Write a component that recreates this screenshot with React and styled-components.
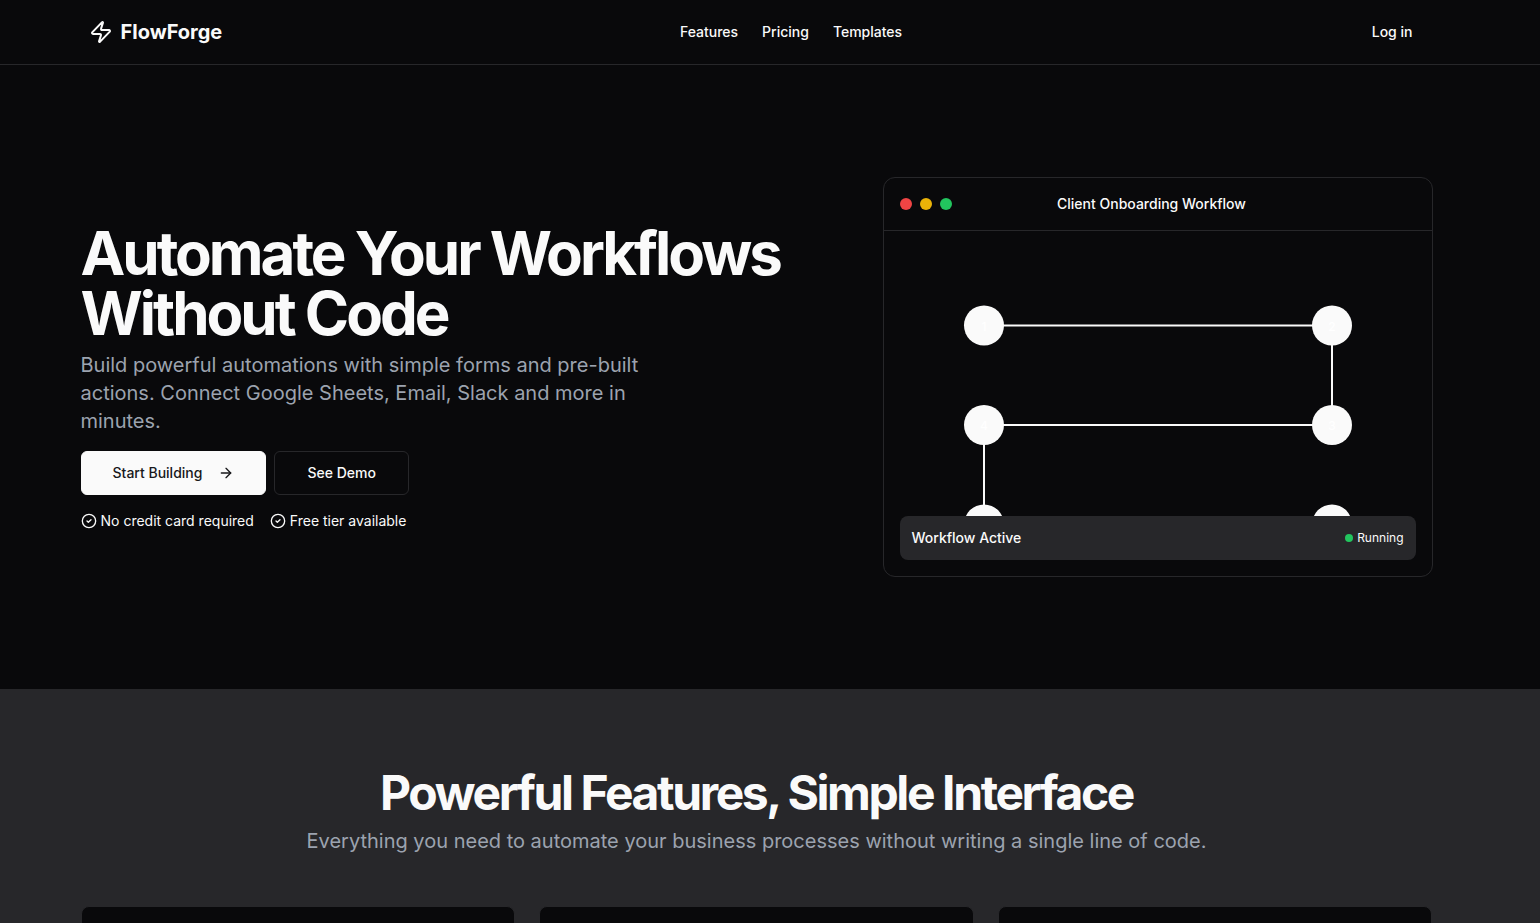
import React from "react";
import styled, { createGlobalStyle } from "styled-components";
import { ArrowRight, CircleCheck, Zap } from "lucide-react";

const GlobalStyle = createGlobalStyle`
  *, *::before, *::after { box-sizing: border-box; }
  body {
    margin: 0;
    background: #09090b;
    color: #fafafa;
    font-family: Inter, "Liberation Sans", sans-serif;
    font-size: 14px;
    line-height: 20px;
  }
  h1, h2, p { margin: 0; }
  a { color: inherit; text-decoration: none; }
`;

const Page = styled.div`
  display: flex;
  flex-direction: column;
  height: 100vh;
  overflow: hidden;
`;

const Container = styled.div`
  width: 100%;
  max-width: 1400px;
  margin: 0 auto;
  padding: 0 24px;
`;

const Header = styled.header`
  flex: none;
  padding-right: 27px;
  border-bottom: 1px solid #27272a;
`;

const HeaderRow = styled.div`
  display: flex;
  align-items: center;
  justify-content: space-between;
  height: 64px;
  padding: 0 8px;
`;

const Brand = styled.a`
  display: flex;
  align-items: center;
  gap: 8px;
  font-size: 20px;
  line-height: 28px;
  font-weight: 700;
`;

const Nav = styled.nav`
  display: flex;
  gap: 24px;
`;

const NavLink = styled.a`
  font-weight: 500;
`;

const LoginLink = styled(NavLink)`
  padding: 8px 12px;
`;

const Hero = styled.section`
  flex: none;
  padding: 112px 27px 112px 0;
`;

const HeroGrid = styled.div`
  display: grid;
  grid-template-columns: minmax(0, 1fr) 550px;
  gap: 48px;
  align-items: center;
`;

const HeroCopy = styled.div`
  display: flex;
  flex-direction: column;
  gap: 16px;
`;

const Intro = styled.div`
  display: flex;
  flex-direction: column;
  gap: 8px;
`;

const HeroTitle = styled.h1`
  font-size: 60px;
  line-height: 60px;
  font-weight: 700;
  letter-spacing: -0.05em;
`;

const HeroText = styled.p`
  max-width: 600px;
  color: #9ca3af;
  font-size: 20px;
  line-height: 28px;
`;

const Row = styled.div`
  display: flex;
  align-items: center;
  gap: ${(p) => p.$gap}px;
`;

const Button = styled.button`
  display: inline-flex;
  align-items: center;
  justify-content: center;
  gap: 16px;
  height: 44px;
  padding: 0 ${(p) => (p.$primary ? 31 : 32)}px;
  border: 1px solid ${(p) => (p.$primary ? "#fafafa" : "#27272a")};
  border-radius: 6px;
  background: ${(p) => (p.$primary ? "#fafafa" : "#09090b")};
  color: ${(p) => (p.$primary ? "#18181b" : "#fafafa")};
  font: 500 14px/20px Inter, "Liberation Sans", sans-serif;
`;

const Perk = styled.span`
  display: flex;
  align-items: center;
  gap: 4px;
`;

const Window = styled.div`
  border: 1px solid #27272a;
  border-radius: 12px;
  height: 400px;
  display: flex;
  flex-direction: column;
  overflow: hidden;
`;

const WindowBar = styled.div`
  display: flex;
  align-items: center;
  justify-content: space-between;
  padding: 16px;
  border-bottom: 1px solid #27272a;
  font-weight: 500;
`;

const Dot = styled.span`
  width: ${(p) => p.$size}px;
  height: ${(p) => p.$size}px;
  border-radius: 50%;
  background: ${(p) => p.$color};
`;

const BarSpacer = styled.span`
  width: 64px;
`;

const Canvas = styled.div`
  position: relative;
  flex: 1;
`;

const Diagram = styled.svg`
  display: block;
  width: 100%;
  height: 100%;
`;

const Status = styled.div`
  position: absolute;
  left: 16px;
  right: 16px;
  bottom: 16px;
  display: flex;
  align-items: center;
  justify-content: space-between;
  padding: 12px;
  border-radius: 8px;
  background: #27272a;
  font-weight: 500;
`;

const Running = styled(Row)`
  font-size: 12px;
  font-weight: 400;
`;

const Features = styled.section`
  flex: 1 0 auto;
  padding: 80px 27px 80px 0;
  background: #27272a;
`;

const FeaturesIntro = styled(Intro)`
  text-align: center;
  margin-bottom: 48px;
`;

const SectionTitle = styled.h2`
  font-size: 48px;
  line-height: 48px;
  font-weight: 700;
  letter-spacing: -0.05em;
`;

const SectionText = styled.p`
  color: #9ca3af;
  font-size: 20px;
  line-height: 33px;
`;

const Cards = styled.div`
  display: grid;
  grid-template-columns: repeat(3, 1fr);
  gap: 24px;
`;

const Card = styled.div`
  min-height: 200px;
  border: 1px solid #27272a;
  border-radius: 8px;
  background: #09090b;
`;

const nodes = [
  { x: 100, y: 94.5, label: "1" },
  { x: 448, y: 94.5, label: "2" },
  { x: 448, y: 194, label: "3" },
  { x: 100, y: 194, label: "4" },
  { x: 100, y: 293.5 },
  { x: 448, y: 293.5 },
];

function WorkflowWindow() {
  return (
    <Window>
      <WindowBar>
        <Row $gap={8}>
          <Dot $size={12} $color="#ef4444" />
          <Dot $size={12} $color="#eab308" />
          <Dot $size={12} $color="#22c55e" />
        </Row>
        <span>Client Onboarding Workflow</span>
        <BarSpacer />
      </WindowBar>
      <Canvas>
        <Diagram viewBox="0 0 548 345">
          <path d="M100 94.5H448V194H100V294" fill="none" stroke="#fafafa" strokeWidth="2" />
          {nodes.map((n, i) => (
            <g key={i}>
              <circle cx={n.x} cy={n.y} r="20" fill="#fafafa" />
              {n.label && (
                <text x={n.x} y={n.y + 5} textAnchor="middle" fill="#ffffff" fontSize="12" fontWeight="500">
                  {n.label}
                </text>
              )}
            </g>
          ))}
        </Diagram>
        <Status>
          <span>Workflow Active</span>
          <Running $gap={4}>
            <Dot $size={8} $color="#22c55e" />
            <span>Running</span>
          </Running>
        </Status>
      </Canvas>
    </Window>
  );
}

export default function App() {
  return (
    <Page>
      <GlobalStyle />
      <Header>
        <Container>
          <HeaderRow>
            <Brand href="#">
              <Zap size={24} />
              <span>FlowForge</span>
            </Brand>
            <Nav>
              <NavLink href="#features">Features</NavLink>
              <NavLink href="#pricing">Pricing</NavLink>
              <NavLink href="#templates">Templates</NavLink>
            </Nav>
            <LoginLink href="#login">Log in</LoginLink>
          </HeaderRow>
        </Container>
      </Header>
      <Hero>
        <Container>
          <HeroGrid>
            <HeroCopy>
              <Intro>
                <HeroTitle>Automate Your Workflows Without Code</HeroTitle>
                <HeroText>
                  Build powerful automations with simple forms and pre-built actions. Connect Google
                  Sheets, Email, Slack and more in minutes.
                </HeroText>
              </Intro>
              <Row $gap={8}>
                <Button $primary>
                  Start Building
                  <ArrowRight size={16} />
                </Button>
                <Button>See Demo</Button>
              </Row>
              <Row $gap={16}>
                <Perk>
                  <CircleCheck size={16} />
                  No credit card required
                </Perk>
                <Perk>
                  <CircleCheck size={16} />
                  Free tier available
                </Perk>
              </Row>
            </HeroCopy>
            <WorkflowWindow />
          </HeroGrid>
        </Container>
      </Hero>
      <Features id="features">
        <Container>
          <FeaturesIntro>
            <SectionTitle>Powerful Features, Simple Interface</SectionTitle>
            <SectionText>
              Everything you need to automate your business processes without writing a single line of
              code.
            </SectionText>
          </FeaturesIntro>
          <Cards>
            <Card />
            <Card />
            <Card />
          </Cards>
        </Container>
      </Features>
    </Page>
  );
}
